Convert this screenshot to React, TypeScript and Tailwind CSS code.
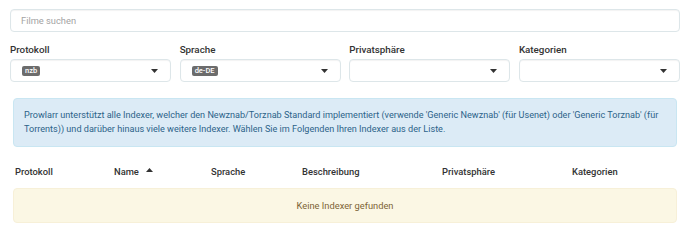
import React from 'react';

const Caret = ({ up = false }: { up?: boolean }) => (
  <svg width="7" height="4" viewBox="0 0 7 4" className="text-[#333]">
    {up ? <path d="M0 4 L3.5 0 L7 4 Z" fill="currentColor" /> : <path d="M0 0 L7 0 L3.5 4 Z" fill="currentColor" />}
  </svg>
);

const Badge = ({ children }: { children: React.ReactNode }) => (
  <span className="inline-flex h-[10px] items-center rounded-[2px] bg-[#6c6c6c] px-[3px] text-[7.5px] font-medium leading-none text-white">
    {children}
  </span>
);

const filters: { label: string; value?: string }[] = [
  { label: 'Protokoll', value: 'nzb' },
  { label: 'Sprache', value: 'de-DE' },
  { label: 'Privatsphäre' },
  { label: 'Kategorien' },
];

const columns = ['Protokoll', 'Name', 'Sprache', 'Beschreibung', 'Privatsphäre', 'Kategorien'];

const App: React.FC = () => {
  return (
    <div className="h-[246px] w-[690px] overflow-hidden bg-white px-[10px] pt-[9px] font-['Roboto',sans-serif] text-[#333]">
      <div className="flex h-[23px] items-center rounded-[4px] border border-[#dde6e9] px-[10px] text-[9.3px] text-[#a3a3a3] shadow-[inset_0_1px_1px_rgba(0,0,0,0.05)]">
        Filme suchen
      </div>

      <div className="mt-[11px] grid grid-cols-4 gap-x-[8.5px]">
        {filters.map(f => (
          <div key={f.label}>
            <div className="h-[14px] text-[9.8px] font-medium leading-[14px] text-[#333]">{f.label}</div>
            <div className="mt-[2px] flex h-[23px] items-center justify-between rounded-[4px] border border-[#dde6e9] pl-[11px] pr-[12px] shadow-[inset_0_1px_1px_rgba(0,0,0,0.05)]">
              <div className="flex items-center">{f.value && <Badge>{f.value}</Badge>}</div>
              <Caret />
            </div>
          </div>
        ))}
      </div>

      <div className="mx-[3px] mt-[16px] rounded-[4px] border border-[#c9e6f2] bg-[#dcebf6] px-[10px] pb-[10px] pt-[9px] text-[9.1px] leading-[14px] text-[#2c6389]">
        Prowlarr unterstützt alle Indexer, welcher den Newznab/Torznab Standard implementiert (verwende 'Generic Newznab' (für Usenet) oder 'Generic Torznab' (für Torrents)) und darüber hinaus viele weitere Indexer. Wählen Sie im Folgenden Ihren Indexer aus der Liste.
      </div>

      <div className="mx-[3px] mt-[15px] grid h-[20px] grid-cols-[101px_97px_91px_140px_130px_1fr] items-center text-[9.4px] font-medium text-[#333]">
        {columns.map(c => (
          <div key={c} className="flex items-center gap-[7px] first:pl-[2px]">
            {c}
            {c === 'Name' && <span className="-mt-[4px] flex"><Caret up /></span>}
          </div>
        ))}
      </div>

      <div className="mx-[3px] mt-[6px] flex h-[35px] items-center justify-center rounded-[4px] border border-[#f7f0d8] bg-[#fbf7e4] text-[9.3px] text-[#7d6434]">
        Keine Indexer gefunden
      </div>
    </div>
  );
};

export default App;
